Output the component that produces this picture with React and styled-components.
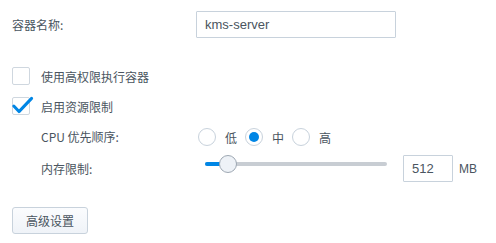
import styled, { createGlobalStyle } from 'styled-components';

const GlobalStyle = createGlobalStyle`
  body {
    margin: 0;
    background: #ffffff;
    font-family: "Noto Sans CJK SC", "Liberation Sans", sans-serif;
    font-size: 12px;
    color: #4a5560;
  }
`;

const Page = styled.div`
  width: 496px;
  height: 243px;
  box-sizing: border-box;
  padding: 11px 0 0 12px;
  display: flex;
  flex-direction: column;
`;

const Row = styled.div`
  display: flex;
  align-items: center;
  height: ${({ $h }) => $h}px;
  margin-top: ${({ $mt }) => $mt || 0}px;
  padding-left: ${({ $indent }) => $indent || 0}px;
`;

const Label = styled.div`
  width: ${({ $w }) => $w}px;
  flex-shrink: 0;
  line-height: 1;
`;

const TextInput = styled.div`
  width: 200px;
  height: 27px;
  box-sizing: border-box;
  border: 1px solid #c8d2dc;
  border-radius: 1px;
  padding-left: 8px;
  display: flex;
  align-items: center;
  font-family: "Liberation Sans", sans-serif;
  font-size: 13px;
  color: #4a5560;
`;

const CheckBox = styled.div`
  position: relative;
  width: 18px;
  height: 18px;
  box-sizing: border-box;
  border: 1px solid #cfd7df;
  border-radius: 2px;
  flex-shrink: 0;
  margin-right: 11px;
`;

const CheckMark = styled.svg`
  position: absolute;
  left: -1px;
  top: -1px;
  overflow: visible;
`;

const RadioGroup = styled.div`
  display: flex;
  align-items: center;
  gap: 8px;
`;

const RadioOption = styled.div`
  display: flex;
  align-items: center;
  gap: 9px;
`;

const RadioCircle = styled.div`
  width: 18px;
  height: 18px;
  box-sizing: border-box;
  border-radius: 50%;
  border: 1px solid #c8d2dc;
  background: #fff;
  display: flex;
  align-items: center;
  justify-content: center;
  &::after {
    content: '';
    width: 10px;
    height: 10px;
    border-radius: 50%;
    background: ${({ $on }) => ($on ? '#0086e5' : 'transparent')};
  }
`;

const SliderWrap = styled.div`
  align-self: flex-start;
  width: 197px;
  height: 18px;
  padding-left: 7px;
  box-sizing: border-box;
  display: flex;
  align-items: center;
`;

const Track = styled.div`
  position: relative;
  width: 182px;
  height: 4px;
  border-radius: 2px;
  background: #c8cdd3;
`;

const Fill = styled.div`
  height: 4px;
  border-radius: 2px;
  background: #0086e5;
`;

const Thumb = styled.div`
  position: absolute;
  top: -7px;
  width: 18px;
  height: 18px;
  box-sizing: border-box;
  margin-left: -9px;
  border-radius: 50%;
  border: 1px solid #9ea8b3;
  background: #eef2f7;
`;

const NumberInput = styled(TextInput)`
  width: 50px;
  margin-left: 8px;
`;

const Unit = styled.div`
  margin-left: 6px;
  font-family: "Liberation Sans", sans-serif;
  font-size: 12px;
`;

const Button = styled.div`
  margin-top: 25px;
  width: 76px;
  height: 27px;
  box-sizing: border-box;
  border: 1px solid #c8d2dc;
  border-radius: 3px;
  background: linear-gradient(#fbfcfe, #eff3f8);
  display: flex;
  align-items: center;
  justify-content: center;
  color: #4a5560;
`;

const mem = { value: 512, max: 4096 };

const App = () => {
  const pos = (mem.value / mem.max) * 182;
  return (
    <>
      <GlobalStyle />
      <Page>
        <Row $h={27}>
          <Label $w={184}>容器名称:</Label>
          <TextInput>kms-server</TextInput>
        </Row>

        <Row $h={18} $mt={29}>
          <CheckBox />
          <span>使用高权限执行容器</span>
        </Row>
        <Row $h={18} $mt={12}>
          <CheckBox>
            <CheckMark width="20" height="18" viewBox="0 0 20 18">
              <path d="M1.8 9 L7 14.6 L19.6 1.4" fill="none" stroke="#0086e5" strokeWidth="3" strokeLinecap="round" strokeLinejoin="round" />
            </CheckMark>
          </CheckBox>
          <span>启用资源限制</span>
        </Row>

        <Row $h={18} $mt={13} $indent={29}>
          <Label $w={157}>CPU 优先顺序:</Label>
          <RadioGroup>
            <RadioOption><RadioCircle /><span>低</span></RadioOption>
            <RadioOption><RadioCircle $on /><span>中</span></RadioOption>
            <RadioOption><RadioCircle /><span>高</span></RadioOption>
          </RadioGroup>
        </Row>

        <Row $h={27} $mt={9} $indent={29}>
          <Label $w={157}>内存限制:</Label>
          <SliderWrap>
            <Track>
              <Fill style={{ width: pos }} />
              <Thumb style={{ left: pos }} />
            </Track>
          </SliderWrap>
          <NumberInput>512</NumberInput>
          <Unit>MB</Unit>
        </Row>

        <Button>高级设置</Button>
      </Page>
    </>
  );
};

export default App;
